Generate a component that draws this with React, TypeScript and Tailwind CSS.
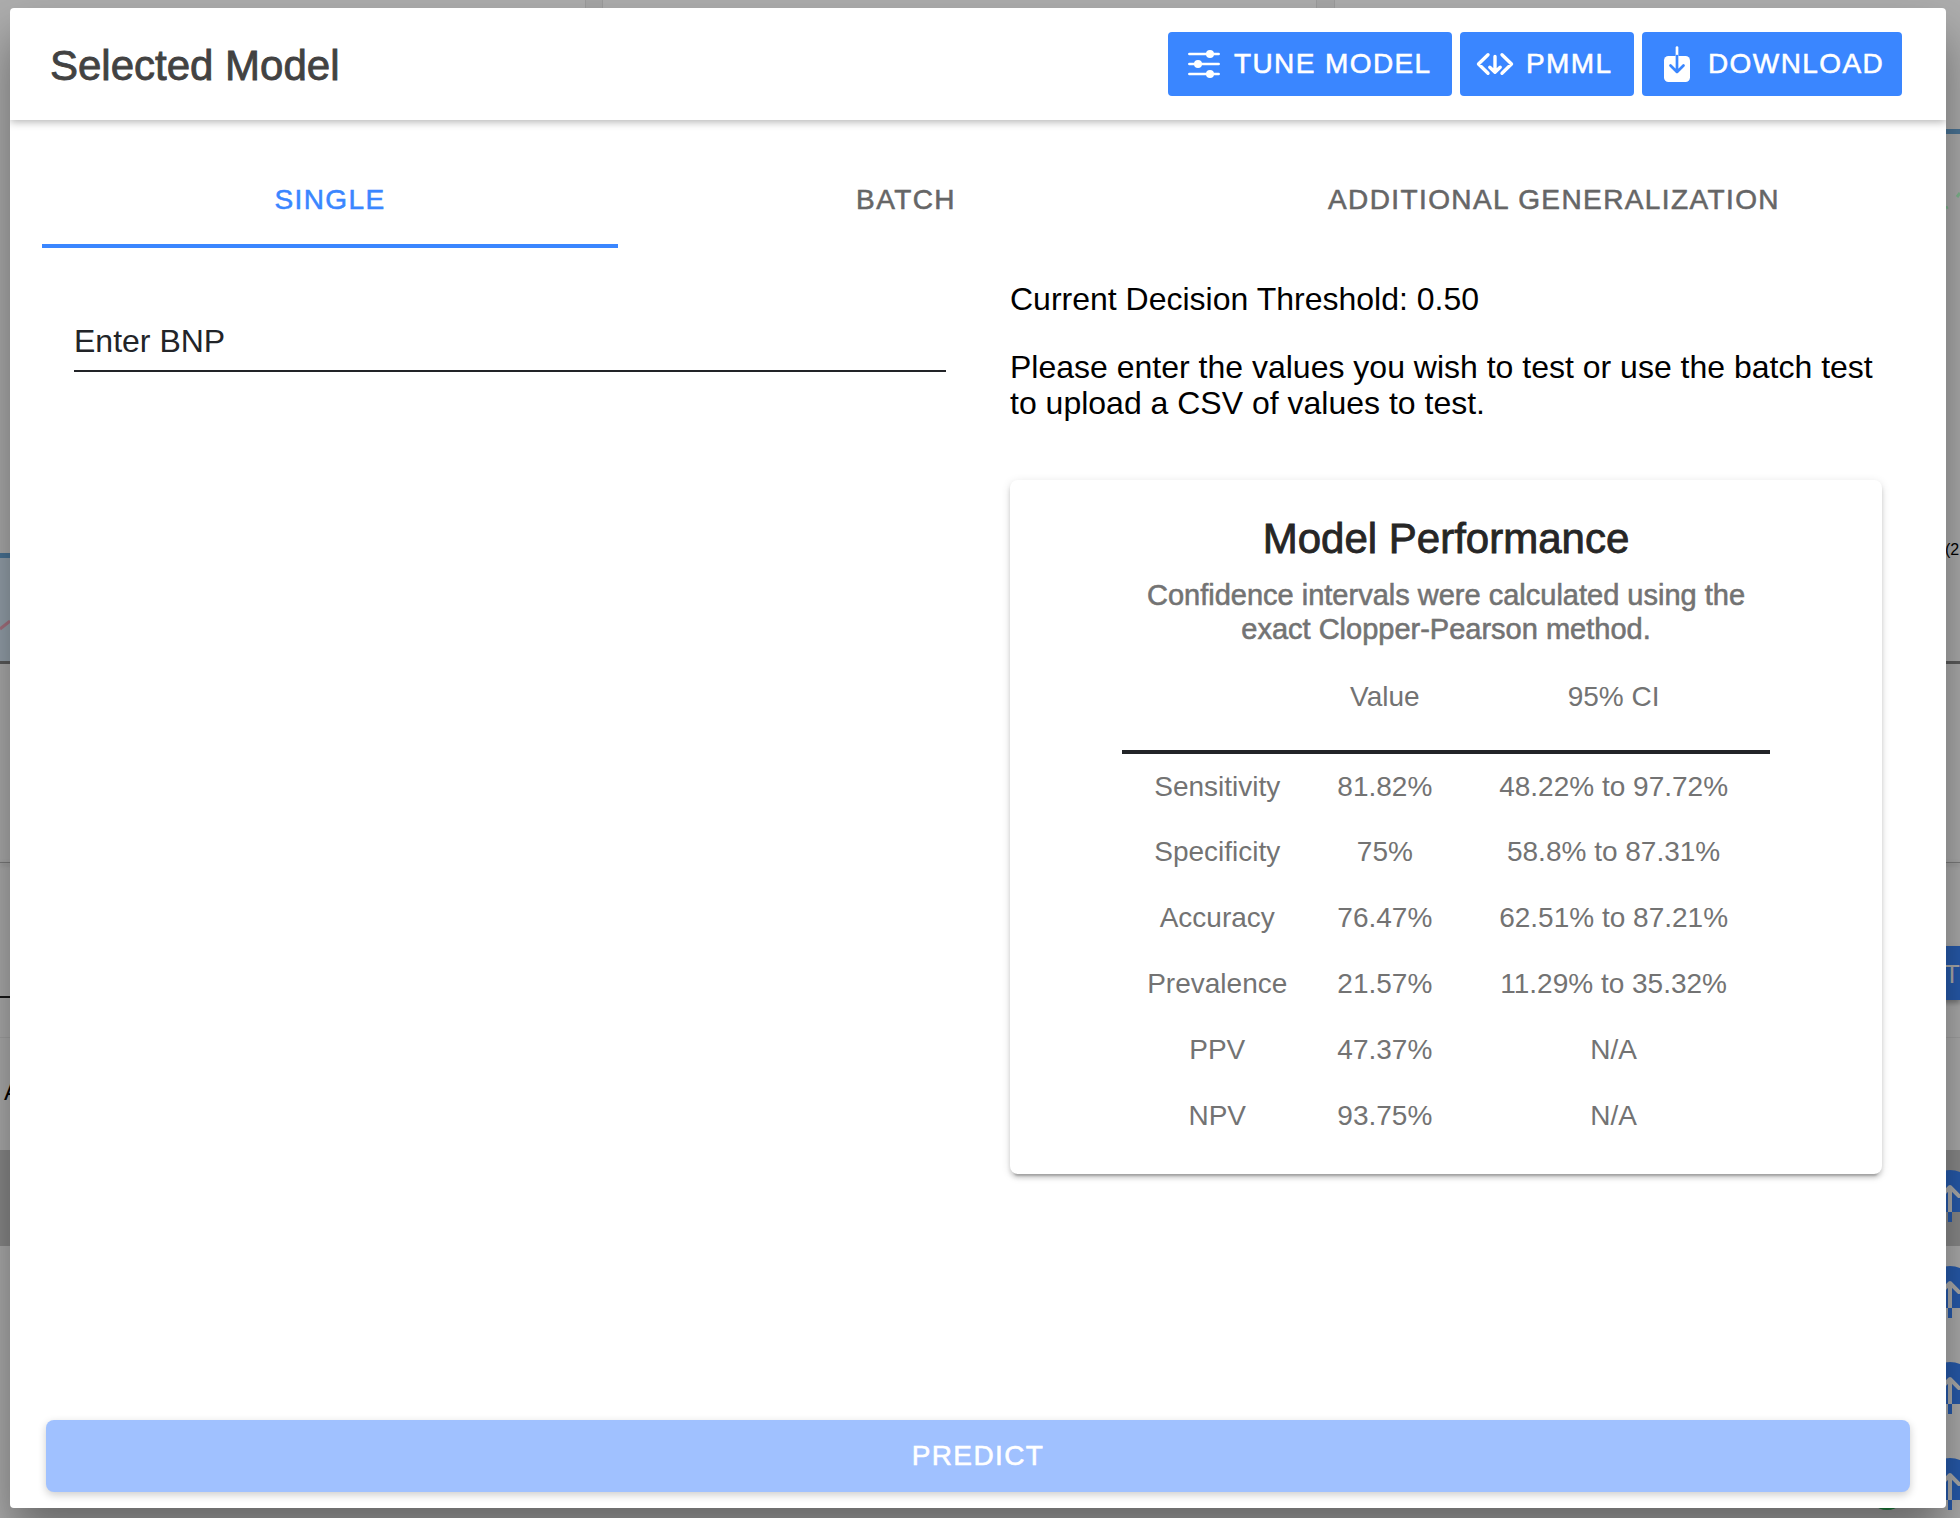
import type { ReactNode } from "react";

const tabs = ["SINGLE", "BATCH", "ADDITIONAL GENERALIZATION"];

const rows = [
  ["Sensitivity", "81.82%", "48.22% to 97.72%"],
  ["Specificity", "75%", "58.8% to 87.31%"],
  ["Accuracy", "76.47%", "62.51% to 87.21%"],
  ["Prevalence", "21.57%", "11.29% to 35.32%"],
  ["PPV", "47.37%", "N/A"],
  ["NPV", "93.75%", "N/A"],
];

function TuneIcon() {
  return (
    <svg viewBox="0 0 32 32" className="size-8 shrink-0" fill="none" stroke="currentColor" strokeWidth="2.7" strokeLinecap="round">
      <path d="M1.400 6h29.200M1.400 16h29.200M1.400 26h29.200" />
      <circle cx="22" cy="6" r="4" fill="currentColor" stroke="none" />
      <circle cx="10" cy="16" r="4" fill="currentColor" stroke="none" />
      <circle cx="22" cy="26" r="4" fill="currentColor" stroke="none" />
    </svg>
  );
}

function CodeDownloadIcon() {
  return (
    <svg viewBox="0 0 40 40" className="size-10 shrink-0" fill="none" stroke="currentColor" strokeWidth="3.4" strokeLinecap="round" strokeLinejoin="round">
      <path d="M12 10.800L2.500 20L12 29.200M26 10.800L35.500 20L26 29.200M13.800 23.200L19 28.200L24.200 23.200M19 28V12.500" />
    </svg>
  );
}

function DownloadIcon() {
  return (
    <svg viewBox="0 0 40 40" className="size-10 shrink-0" fill="none">
      <rect x="6" y="12" width="26" height="26" rx="4.500" fill="currentColor" />
      <path d="M19 3.500V12" stroke="currentColor" strokeWidth="2.7" strokeLinecap="round" />
      <path d="M19 12v16M12.500 21.500L19 28l6.500-6.500" stroke="#3a86ff" strokeWidth="2.7" strokeLinecap="round" strokeLinejoin="round" />
    </svg>
  );
}

function HeaderButton({ children, className }: { children: ReactNode; className: string }) {
  return (
    <button
      type="button"
      className={`flex h-16 items-center rounded bg-[#3a86ff] text-[28px] font-medium tracking-wider text-white [-webkit-text-stroke:0.02em] ${className}`}
    >
      {children}
    </button>
  );
}

function UploadIcon() {
  return (
    <svg viewBox="0 0 60 60" className="size-[60px]" fill="none">
      <path d="M4 42V26A26 26 0 0 1 56 26V42z" fill="#275bad" />
      <path d="M30 42V18M21 26l9-9 9 9" stroke="#adadad" strokeWidth="4" strokeLinecap="round" strokeLinejoin="round" />
      <path d="M30 42v10" stroke="#275bad" strokeWidth="4" />
    </svg>
  );
}

function Backdrop() {
  return (
    <div aria-hidden="true" className="absolute inset-0 overflow-hidden bg-[#adadad]">
      <div className="absolute top-0 left-[585px] h-4 w-[18px] border-x border-[#9c9c9c] bg-[#a6a6a6]" />
      <div className="absolute top-0 left-[1316px] h-4 w-[19px] border-x border-[#9c9c9c] bg-[#a6a6a6]" />
      <div className="absolute top-[129px] right-0 h-[5px] w-5 bg-[#4a7496]" />
      <div className="absolute top-[553px] left-0 h-[108px] w-5 border-t-[5px] border-[#4a7496] bg-[#96a2ac]" />
      <svg viewBox="0 0 10 12" className="absolute top-[620px] left-0 h-3 w-2.5">
        <path d="M0 9l10-8" stroke="#a87381" strokeWidth="3" />
      </svg>
      <svg viewBox="0 0 14 20" className="absolute top-[192px] right-0 h-5 w-3.5">
        <path d="M0 16l2-1M11 5l3-4" stroke="#7fb68e" strokeWidth="3" />
      </svg>
      <div className="absolute top-[661px] left-0 h-[3px] w-full bg-[#5c5c5c]" />
      <div className="absolute top-[862px] left-0 h-px w-full bg-[#7c7c7c] shadow-[0_2px_4px_#777]" />
      <div className="absolute top-[996px] left-0 h-0.5 w-10 bg-[#181818]" />
      <div className="absolute top-[946px] right-0 h-[54px] w-10 bg-[#275bad] shadow-[0_3px_5px_#777]" />
      <div className="absolute top-[960px] left-[1944px] text-[26px] leading-7 text-[#adadad]">T</div>
      <div className="absolute top-[540px] left-[1945px] text-base leading-5 text-black">(2</div>
      <div className="absolute top-[1037px] left-0 h-px w-full bg-[#a2a2a2]" />
      <div className="absolute top-[1078px] left-1 text-2xl leading-7 text-black">A</div>
      <div className="absolute top-[1150px] left-0 h-24 w-full bg-[#8a8a8a]" />
      <div className="absolute top-[1170px] left-[1920px] flex w-[60px] flex-col gap-9">
        {[0, 1, 2, 3].map((n) => (
          <UploadIcon key={n} />
        ))}
      </div>
      <div className="absolute bottom-2 left-[1867px] size-10 rounded-full bg-[#1f8a40]" />
    </div>
  );
}

export default function App() {
  return (
    <div className="relative flex h-screen overflow-hidden pt-2 pr-3.5 pb-2.5 pl-2.5 font-['Liberation_Sans',sans-serif]">
      <Backdrop />
      <main className="relative flex flex-1 flex-col overflow-hidden rounded bg-white shadow-[0_28px_48px_rgba(0,0,0,0.4)]">
        <header className="flex h-28 shrink-0 items-center justify-between rounded-t pr-11 pl-10 shadow-[0_2px_8px_rgba(0,0,0,0.3)]">
          <h1 className="pt-1 text-[42px] leading-[48px] font-medium text-[#424242] [-webkit-text-stroke:0.02em]">Selected Model</h1>
          <div className="flex gap-2">
            <HeaderButton className="w-[284px] gap-3.5 pl-5">
              <TuneIcon />
              TUNE MODEL
            </HeaderButton>
            <HeaderButton className="w-[174px] gap-2.5 pl-4">
              <CodeDownloadIcon />
              PMML
            </HeaderButton>
            <HeaderButton className="w-[260px] gap-2.5 pl-4">
              <DownloadIcon />
              DOWNLOAD
            </HeaderButton>
          </div>
        </header>

        <div role="tablist" className="mx-8 mt-8 grid h-24 shrink-0 grid-cols-[576px_576px_1fr]">
          {tabs.map((tab, i) => (
            <button
              key={tab}
              type="button"
              role="tab"
              aria-selected={i === 0}
              className={
                i === 0
                  ? "border-b-4 border-[#3a86ff] pt-1 text-[28px] font-medium tracking-wider text-[#3a86ff] [-webkit-text-stroke:0.02em]"
                  : "border-b-4 border-transparent pt-1 text-[28px] font-medium tracking-wider text-[#666] [-webkit-text-stroke:0.02em]"
              }
            >
              {tab}
            </button>
          ))}
        </div>

        <div className="grid flex-1 grid-cols-2 gap-16 px-16 pt-8">
          <section>
            <input
              aria-label="Enter BNP"
              placeholder="Enter BNP"
              className="mt-8 h-[60px] w-full border-b-2 border-[#222428] bg-transparent text-[32px] text-[#222428] outline-none placeholder:text-[#222428] placeholder:opacity-100"
            />
          </section>
          <section className="pt-px">
            <p className="text-[32px] leading-9 text-black">Current Decision Threshold: 0.50</p>
            <p className="mt-8 text-[32px] leading-9 text-black">
              Please enter the values you wish to test or use the batch test to upload a CSV of values to test.
            </p>
            <div className="mt-[59px] flex flex-col items-center rounded-lg px-28 pt-[34px] pb-[26px] text-center shadow-[0_6px_2px_-4px_rgba(0,0,0,0.2),0_4px_4px_rgba(0,0,0,0.14),0_2px_10px_rgba(0,0,0,0.12)]">
              <h2 className="text-[42px] leading-[50px] font-medium text-[#262626] [-webkit-text-stroke:0.02em]">Model Performance</h2>
              <p className="mt-3.5 text-[29px] leading-[34px] font-medium text-[#737373] [-webkit-text-stroke:0.02em]">
                Confidence intervals were calculated using the exact Clopper-Pearson method.
              </p>
              <table className="mt-4.5 w-full text-[28px] leading-[34px] text-[#737373]">
                <thead>
                  <tr className="h-[88px] border-b-4 border-[#222428] align-top">
                    <td />
                    <th scope="col" className="pt-4 font-normal">Value</th>
                    <th scope="col" className="pt-4 font-normal">95% CI</th>
                  </tr>
                </thead>
                <tbody>
                  {rows.map(([name, value, ci]) => (
                    <tr key={name} className="h-[66px]">
                      <th scope="row" className="px-6 pt-0.5 font-normal">{name}</th>
                      <td className="px-6 pt-0.5">{value}</td>
                      <td className="px-10 pt-0.5">{ci}</td>
                    </tr>
                  ))}
                </tbody>
              </table>
            </div>
          </section>
        </div>

        <footer className="shrink-0 px-9 pb-4">
          <button
            type="button"
            disabled
            className="h-[72px] w-full rounded-lg bg-[#a0c1ff] text-[28px] font-medium tracking-wider text-white shadow-[0_3px_8px_rgba(0,0,0,0.2)] [-webkit-text-stroke:0.02em]"
          >
            PREDICT
          </button>
        </footer>
      </main>
    </div>
  );
}
